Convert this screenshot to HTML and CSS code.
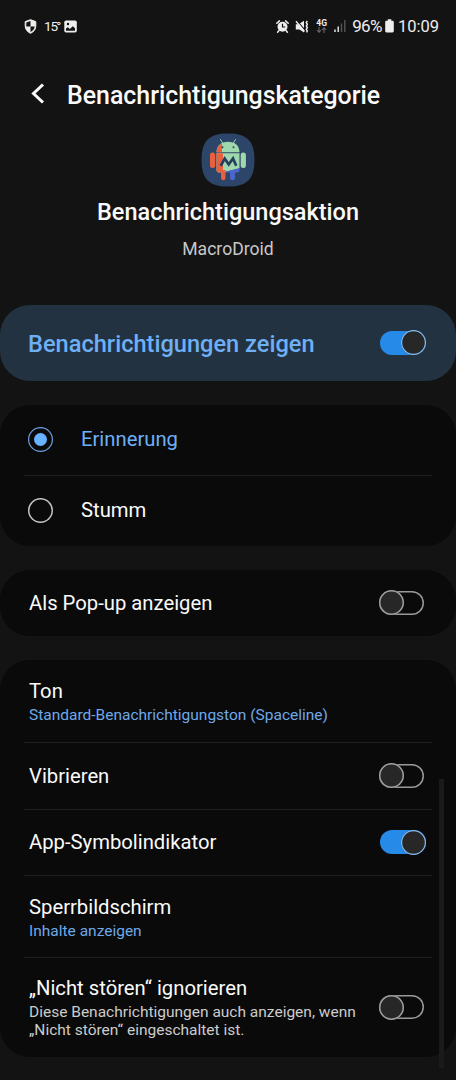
FILE: index.html
```html
<!DOCTYPE html>
<html lang="de">
<head>
    <meta charset="UTF-8">
    <meta name="viewport" content="width=device-width, initial-scale=1.0">
    <title>Benachrichtigungskategorie</title>
    <link rel="stylesheet" href="styles.css">
</head>
<body>

<div class="status-bar">
    <div class="status-left">
        <svg class="shield" width="13" height="15" viewBox="0 0 12 15">
            <path d="M6 .7 11.3 2.6V7c0 3.400-2.200 6-5.300 7.300C2.900 13 .7 10.400.7 7V2.600Z" fill="#eee" stroke="#eee" stroke-linejoin="round"/>
            <path d="M6 2v5.500H1.800V3.500ZM6 7.500h4.200c-.3 2.500-1.900 4.300-4.200 5.400Z" fill="#131313"/>
        </svg>
        <span class="temp">15<span class="degree">°</span></span>
        <svg class="picture" width="13" height="13" viewBox="0 0 13 13">
            <rect x=".3" y=".5" width="12.500" height="12" rx="1.800" fill="#eee"/>
            <circle cx="4" cy="4" r="1.200" fill="#131313"/>
            <path d="M2 10.800V8.600l1.800-1.400 2 1.700 3-2.700 2.200 2v2.600Z" fill="#131313"/>
        </svg>
    </div>
    <div class="status-right">
        <svg class="alarm" width="13" height="13" viewBox="0 0 13 13">
            <circle cx="6.500" cy="6.700" r="5" fill="#eee"/>
            <path d="M.8 3.200 3.400.9M12.200 3.200 9.600.9M2.800 10.800 1.600 12.200M10.200 10.800l1.200 1.400" stroke="#eee" stroke-width="1.500" stroke-linecap="round"/>
            <path d="M6.500 3.800v3.200h2.700" fill="none" stroke="#131313" stroke-width="1.200"/>
        </svg>
        <svg class="mute" width="14" height="13" viewBox="0 0 14 13">
            <path d="M.8 4.300h2.700L9 .7v11.800L4.500 9.400H.8Z" fill="#eee"/>
            <path d="M1.600.4 10 10.200" stroke="#131313" stroke-width="1.200"/>
            <path d="M1 1.300 9.500 11.500" stroke="#eee" stroke-width="1.400"/>
            <path d="M12.300 1l-1 1.700 1 1.600-1 1.700 1 1.700-1 1.600 1 1.700-.8 1.300" fill="none" stroke="#eee" stroke-width="1.500"/>
        </svg>
        <div class="network">
            <span>4G</span>
            <svg width="11" height="6" viewBox="0 0 11 6">
                <path d="M3 0v5M1 3l2 2.300L5 3M8 6V1M6 3l2-2.300L10 3" fill="none" stroke="#666" stroke-width="1.100"/>
            </svg>
        </div>
        <svg class="signal" width="12" height="12" viewBox="0 0 12 12">
            <path d="M1 9.500V12M4.200 6.500V12" stroke="#eee" stroke-width="1.400"/>
            <path d="M7.500 3.500V12M10.800 0V12" stroke="#555" stroke-width="1.400"/>
        </svg>
        <span class="battery-level">96%</span>
        <svg class="battery" width="9" height="14" viewBox="0 0 9 14">
            <path d="M2.700.3h3.600v1.500H7.500q1.300 0 1.300 1.300v9q0 1.300-1.300 1.300h-6Q.2 13.400.2 12.100v-9Q.2 1.800 1.500 1.800h1.200Z" fill="#eee"/>
        </svg>
        <span class="clock">10:09</span>
    </div>
</div>

<header class="header">
    <svg class="back" width="14" height="21" viewBox="0 0 14 21">
        <path d="M12 1.500 2.500 10.500 12 19.500" fill="none" stroke="#fafafa" stroke-width="3"/>
    </svg>
    <h1>Benachrichtigungskategorie</h1>
</header>

<section class="app">
    <svg class="app-icon" width="54" height="54" viewBox="0 0 54 54">
        <path d="M27 .5C46 .5 53.500 8 53.500 27S46 53.500 27 53.500.5 46 .5 27 8 .5 27 .5Z" fill="#2c4568"/>
        <path d="m19.500 6.500 3 5M34.500 6.500l-3 5" stroke="#97d4a6" stroke-width="1" stroke-linecap="round"/>
        <path d="M15.500 19.300C15.800 12.300 20 8.800 27 8.800s11.200 3.500 11.500 10.500Z" fill="#a0d8ad"/>
        <path d="M15.500 19.300c.2-4.300 2-7.500 5.500-9V19.300Z" fill="#e8603f"/>
        <circle cx="21.500" cy="14.200" r="1" fill="#2c4568"/>
        <circle cx="32.500" cy="14.200" r="1" fill="#2c4568"/>
        <path d="M15.500 20.300h23V35.500L21.500 39.500h-3.500q-2.500 0-2.500-2.700Z" fill="#a0d8ad"/>
        <path d="M15.500 20.300h6.500V39.500h-4q-2.500 0-2.500-2.700Z" fill="#e8603f"/>
        <path d="m22 39.500 16.500-4.500v2q0 2.500-2.700 2.500Z" fill="#4c65c8"/>
        <rect x="9" y="19.500" width="5.200" height="15.500" rx="2.500" fill="#e8603f"/>
        <rect x="39.700" y="19.500" width="5.200" height="15.500" rx="2.500" fill="#a0d8ad"/>
        <path d="M20 37h4.500v8q0 2.300-2.200 2.300T20 45Z" fill="#e8603f"/>
        <path d="M29 37h5v8q0 2.300-2.500 2.300T29 45Z" fill="#4c65c8"/>
        <path d="m19.700 32.800 4-7.300 4 6 4.300-6 3.200 7.300" fill="none" stroke="#263e60" stroke-width="2.700"/>
    </svg>
    <h2>Benachrichtigungsaktion</h2>
    <p>MacroDroid</p>
</section>

<main>
    <div class="card main-switch">
        <span class="main-label">Benachrichtigungen zeigen</span>
        <span class="switch on"></span>
    </div>

    <div class="card">
        <div class="row option selected">
            <span class="radio"></span>
            <span class="title">Erinnerung</span>
        </div>
        <div class="row option">
            <span class="radio"></span>
            <span class="title">Stumm</span>
        </div>
    </div>

    <div class="card">
        <div class="row">
            <span class="title">Als Pop-up anzeigen</span>
            <span class="switch"></span>
        </div>
    </div>

    <div class="card">
        <div class="row tall">
            <div>
                <div class="title">Ton</div>
                <div class="value">Standard-Benachrichtigungston (Spaceline)</div>
            </div>
        </div>
        <div class="row">
            <span class="title">Vibrieren</span>
            <span class="switch"></span>
        </div>
        <div class="row">
            <span class="title">App-Symbolindikator</span>
            <span class="switch on"></span>
        </div>
        <div class="row tall">
            <div>
                <div class="title">Sperrbildschirm</div>
                <div class="value">Inhalte anzeigen</div>
            </div>
        </div>
        <div class="row dnd">
            <div>
                <div class="title">„Nicht stören“ ignorieren</div>
                <div class="description">Diese Benachrichtigungen auch anzeigen, wenn<br>„Nicht stören“ eingeschaltet ist.</div>
            </div>
            <span class="switch"></span>
        </div>
    </div>
</main>

<div class="scrollbar"></div>

</body>
</html>
```
FILE: styles.css
```css
* {
    box-sizing: border-box;
}
body {
    margin: 0;
    height: 1080px;
    overflow: hidden;
    background-color: #131313;
    color: #fafafa;
    font-family: Roboto, 'Liberation Sans', sans-serif;
    white-space: nowrap;
}
h1, h2, p {
    margin: 0;
}
svg {
    display: block;
    flex-shrink: 0;
}
.status-bar {
    display: flex;
    justify-content: space-between;
    height: 52px;
    padding: 0 17px 0 24px;
    color: #eee;
}
.status-left,
.status-right {
    display: flex;
    align-items: center;
}
.temp {
    margin-left: 7px;
    width: 20px;
    font-size: 13.500px;
    letter-spacing: -1px;
}
.degree {
    margin-left: -1px;
}
.mute {
    margin-left: 6px;
}
.network {
    display: flex;
    flex-direction: column;
    align-items: center;
    margin-left: 7px;
    font-size: 8.500px;
    font-weight: bold;
    line-height: 8px;
}
.signal {
    margin-left: 7px;
}
.battery-level {
    margin-left: 6px;
    font-size: 17px;
    letter-spacing: -0.6px;
}
.battery {
    margin-left: 3px;
}
.clock {
    margin-left: 4px;
    font-size: 16.500px;
}
.header {
    display: flex;
    align-items: center;
    height: 81px;
    padding-left: 31px;
}
.back {
    margin-top: 1px;
}
.header h1 {
    margin: 5px 0 0 22px;
    font-size: 24.900px;
    font-weight: 500;
}
.app {
    display: flex;
    flex-direction: column;
    align-items: center;
    height: 172px;
}
.app h2 {
    margin-top: 11px;
    font-size: 23.500px;
    font-weight: 500;
    line-height: 28px;
}
.app p {
    margin-top: 12px;
    font-size: 17.600px;
    line-height: 23px;
    color: #c8c8c8;
}
.card {
    margin-bottom: 24px;
    border-radius: 30px;
    background-color: #0a0a0a;
}
.main-switch {
    display: flex;
    align-items: center;
    justify-content: space-between;
    height: 75.500px;
    padding: 0 30px 0 28px;
    background-color: #233240;
}
.main-label {
    margin-top: 2px;
    font-size: 23.600px;
    font-weight: 500;
    color: #6eb0f6;
}
.row {
    display: flex;
    align-items: center;
    justify-content: space-between;
    height: 66.500px;
    margin: 0 24px;
    padding: 0 6px 0 5px;
}
.row + .row {
    border-top: 1px solid #202020;
}
.title {
    font-size: 20.250px;
    line-height: 26px;
}
.option {
    height: 70.500px;
    justify-content: flex-start;
    padding-left: 4px;
}
.option .title {
    margin: 0 0 2px 28px;
}
.radio {
    width: 25px;
    height: 25px;
    border-radius: 50%;
    box-shadow: inset 0 0 0 1.500px #c4c4c4;
}
.selected {
    color: #6eb0f6;
}
.selected .radio {
    padding: 6px;
    background: #69b2ff content-box;
    background-clip: content-box;
    box-shadow: inset 0 0 0 1.200px #6c9fe0;
}
.tall {
    height: 82px;
}
.value,
.description {
    font-size: 15.500px;
    line-height: 18px;
}
.value {
    margin-top: 2px;
    color: #6fa8e8;
}
.description {
    margin-top: 2px;
    color: #ccc;
}
.row.dnd {
    height: 99.500px;
}
.switch {
    position: relative;
    flex-shrink: 0;
    width: 45px;
    height: 24px;
    margin-right: 1px;
    border-radius: 12px;
    box-shadow: inset 0 0 0 1.500px #999;
}
.switch::after {
    content: '';
    position: absolute;
    top: -0.5px;
    left: 0;
    width: 25px;
    height: 25px;
    border-radius: 50%;
    background-color: #272727;
    box-shadow: inset 0 0 0 1.500px #a0a0a0;
}
.row .switch:not(.on) {
    margin-right: 2px;
}
.switch.on {
    margin-right: 0.5px;
    width: 46px;
    background-color: #258ae8;
    box-shadow: none;
}
.switch.on::after {
    left: auto;
    right: 0;
    box-shadow: inset 0 0 0 1.200px #85bff5;
}
.scrollbar {
    position: absolute;
    top: 779px;
    right: 12px;
    width: 5px;
    height: 289px;
    background-color: #1a1a1a;
}
```
